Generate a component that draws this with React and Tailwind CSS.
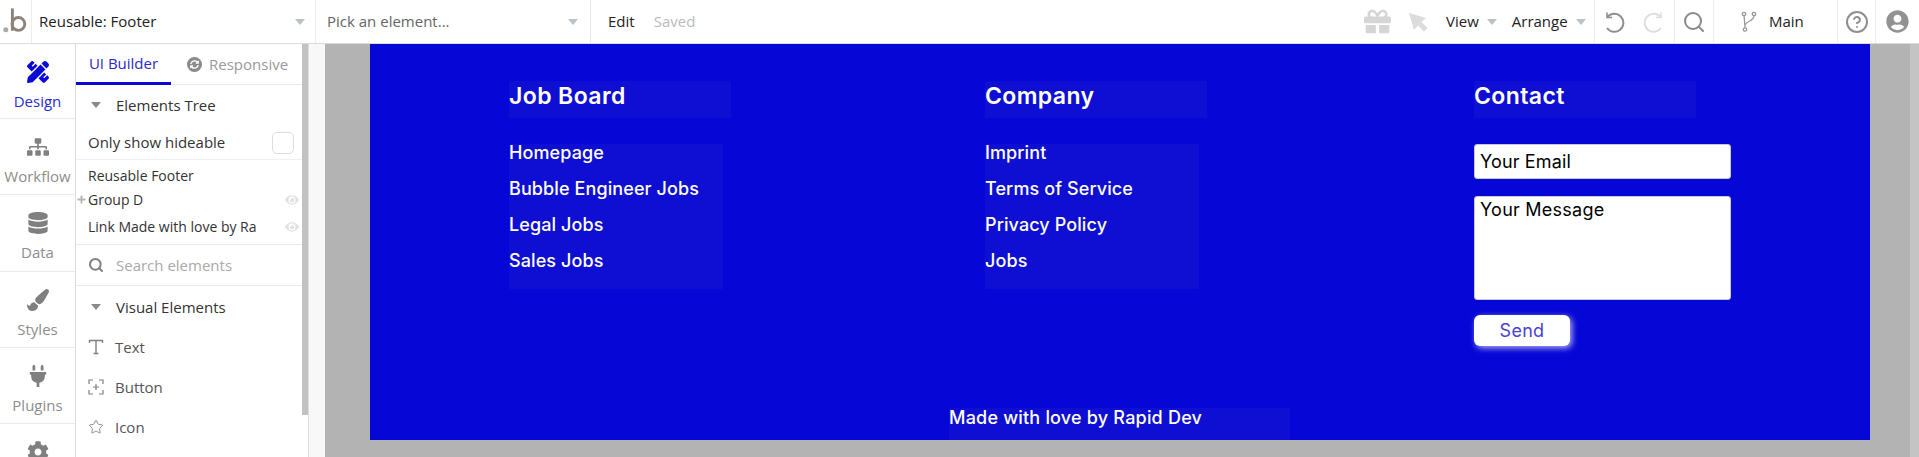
import React from "react";
import {
  FaPencilRuler,
  FaSitemap,
  FaDatabase,
  FaPaintBrush,
  FaPlug,
  FaCog,
  FaSyncAlt,
  FaEye,
  FaGift,
  FaUserCircle,
} from "react-icons/fa";
import { Search, Star, Plus, CircleHelp } from "lucide-react";

const Caret = ({ className = "" }) => (
  <span
    className={`w-0 h-0 border-l-[5px] border-r-[5px] border-t-[6px] border-l-transparent border-r-transparent border-t-[#b9c2c9] ${className}`}
  />
);

const DarkCaret = () => (
  <span className="w-0 h-0 border-l-[5.5px] border-r-[5.5px] border-t-[6px] border-l-transparent border-r-transparent border-t-[#8a8a8a]" />
);

const BubbleLogo = () => (
  <svg viewBox="0 0 32 44" className="w-[32px] h-[44px]" fill="none" stroke="#8c8279">
    <circle cx="6" cy="30" r="2.6" fill="#a8a8a8" stroke="none" />
    <path d="M12.8 8v23" strokeWidth="3" />
    <circle cx="19" cy="24" r="6.6" strokeWidth="3" />
  </svg>
);

const UndoIcon = ({ className = "" }) => (
  <svg viewBox="0 0 22 22" className={`w-[22px] h-[22px] ${className}`} fill="none" stroke="currentColor" strokeWidth="2">
    <path d="M4.5 6 A9 9 0 1 1 4 17" />
    <path d="M4 1.5 V6.5 H9" strokeWidth="1.6" />
  </svg>
);

const railItems = [
  { label: "Design", icon: FaPencilRuler, h: "h-[75px]", active: true },
  { label: "Workflow", icon: FaSitemap, h: "h-[76px]" },
  { label: "Data", icon: FaDatabase, h: "h-[77px]" },
  { label: "Styles", icon: FaPaintBrush, h: "h-[76px]" },
  { label: "Plugins", icon: FaPlug, h: "h-[76px]" },
  { icon: FaCog, h: "h-[76px]" },
];

const columns = [
  {
    title: "Job Board",
    colW: "w-[476px]",
    links: ["Homepage", "Bubble Engineer Jobs", "Legal Jobs", "Sales Jobs"],
  },
  {
    title: "Company",
    colW: "w-[489px]",
    links: ["Imprint", "Terms of Service", "Privacy Policy", "Jobs"],
  },
];

const TopBar = () => (
  <div className="h-[44px] flex items-stretch bg-white border-b border-[#dcdcdc] text-[15px]">
    <div className="w-[32px] border-r border-[#ededed] flex items-center justify-center">
      <BubbleLogo />
    </div>
    <div className="w-[284px] border-r border-[#ededed] flex items-center justify-between pl-[7px] pr-[10px] text-[#222]">
      <span>Reusable: Footer</span>
      <Caret />
    </div>
    <div className="w-[275px] border-r border-[#e6ebee] flex items-center justify-between pl-[11px] pr-[12px] text-[#666]">
      <span>Pick an element...</span>
      <Caret />
    </div>
    <div className="flex items-center pl-[17px] gap-[19px]">
      <span className="text-[#222]">Edit</span>
      <span className="text-[#bbb]">Saved</span>
    </div>

    <div className="ml-auto flex items-stretch">
      <div className="flex items-center w-[240px] pl-[9px] border-r border-[#ededed] text-[#222]">
        <FaGift className="text-[#d5d5d5] w-[27px] h-[27px]" />
        <svg viewBox="0 0 20 20" className="w-[20px] h-[20px] ml-[17px] mr-[18px]">
          <path d="M1 1 L18 6 L13.5 10 L19.5 16 L16 19.5 L10 13.5 L6 18 Z" fill="#dcdcdc" />
        </svg>
        <span>View</span>
        <Caret className="ml-[8px] mr-[15px]" />
        <span>Arrange</span>
        <Caret className="ml-[8px]" />
      </div>
      <div className="flex items-center w-[80px] pl-[8px] gap-[18px] border-r border-[#e6ebee]">
        <UndoIcon className="text-[#8f8f8f]" />
        <UndoIcon className="text-[#dedede] -scale-x-100" />
      </div>
      <div className="flex items-center justify-center w-[39px] border-r border-[#ededed]">
        <Search className="w-[24px] h-[24px] text-[#8a8a8a]" strokeWidth={2} />
      </div>
      <div className="flex items-center w-[124px] pl-[26px] gap-[10px] border-r border-[#ededed] text-[#222]">
        <svg viewBox="0 0 19 22" className="w-[19px] h-[22px]" fill="none" stroke="#999" strokeWidth="1.3">
          <circle cx="4" cy="3" r="1.7" />
          <circle cx="14" cy="3" r="1.7" />
          <circle cx="5" cy="18.5" r="1.7" />
          <path d="M4.1 4.7 L5 16.8 M14 4.7 C14 10 6 10 5 14" />
        </svg>
        <span>Main</span>
      </div>
      <div className="flex items-center justify-center w-[38px] border-r border-[#ededed]">
        <CircleHelp className="w-[24px] h-[24px] text-[#8f8f8f]" strokeWidth={2} />
      </div>
      <div className="flex items-center justify-center w-[43px]">
        <FaUserCircle className="w-[23px] h-[23px] text-[#929292]" />
      </div>
    </div>
  </div>
);

const Rail = () => (
  <div className="w-[76px] h-full shrink-0 border-r border-[#dcdcdc] bg-white overflow-hidden">
    {railItems.map((item, i) => {
      const Icon = item.icon;
      return (
        <div
          key={i}
          className={`${item.h} border-b border-[#e6ebee] flex flex-col items-center pt-[17px] gap-[8px] text-[15px] ${
            item.active ? "text-[#2a2ad6]" : "text-[#8d8d8d]"
          }`}
        >
          <Icon className={`w-[22px] h-[22px] ${item.active ? "text-[#0a0ad6]" : "text-[#808080]"}`} />
          {item.label && <span className="leading-[20px]">{item.label}</span>}
        </div>
      );
    })}
  </div>
);

const ElementRow = ({ icon, label }) => (
  <div className="h-[40px] flex items-center pl-[12px] gap-[11px] text-[#555]">
    <span className="w-[16px] flex justify-center text-[#808080]">{icon}</span>
    <span>{label}</span>
  </div>
);

const Panel = () => (
  <div className="w-[233px] h-full shrink-0 flex border-r border-[#dcdcdc] bg-white text-[15px] overflow-hidden">
    <div className="w-[226px] shrink-0">
      <div className="h-[41px] flex border-b border-[#e6ebee]">
        <div className="w-[95px] h-[41px] border-b-[3px] border-[#0a0ad6] text-[#2a2ac8] flex items-center justify-center">
          UI Builder
        </div>
        <div className="flex items-center pl-[16px] gap-[7px] text-[#999]">
          <span className="w-[15px] h-[15px] rounded-full bg-[#8a8a8a] flex items-center justify-center">
            <FaSyncAlt className="w-[9px] h-[9px] text-white" />
          </span>
          <span>Responsive</span>
        </div>
      </div>
      <div className="h-[40px] flex items-center pl-[15px] gap-[15px] text-[#333]">
        <DarkCaret />
        <span>Elements Tree</span>
      </div>
      <div className="h-[35px] flex items-center justify-between pl-[12px] pr-[8px] pt-[1px] border-b border-[#eef1f3] text-[#333]">
        <span>Only show hideable</span>
        <span className="w-[22px] h-[22px] rounded-[5px] border border-[#dcdcdc]" />
      </div>
      <div className="h-[85px] border-b border-[#e6ebee] pl-[12px] pr-[3px] text-[14px] text-[#333]">
        <div className="h-[29px] flex items-center pt-[2px]">Reusable Footer</div>
        <div className="relative h-[21px] flex items-center justify-between">
          <Plus className="absolute -left-[12px] w-[11px] h-[11px] text-[#b5b5b5]" strokeWidth={4} />
          <span>Group D</span>
          <FaEye className="w-[14px] h-[14px] text-[#e2e2e2]" />
        </div>
        <div className="h-[33px] flex items-center justify-between">
          <span>Link Made with love by Ra</span>
          <FaEye className="w-[14px] h-[14px] text-[#e2e2e2]" />
        </div>
      </div>
      <div className="h-[41px] flex items-center pl-[12px] gap-[12px] border-b border-[#e6ebee] text-[#aaa]">
        <Search className="w-[16px] h-[16px] text-[#808080]" strokeWidth={3} />
        <span>Search elements</span>
      </div>
      <div className="h-[41px] flex items-center pl-[15px] pt-[1px] gap-[15px] text-[#333]">
        <DarkCaret />
        <span>Visual Elements</span>
      </div>
      <ElementRow
        icon={
          <svg viewBox="0 0 16 16" className="w-[16px] h-[16px]" fill="none" stroke="#808080" strokeWidth="1.4">
            <path d="M1.5 4V1.5h13V4M8 1.5v13M5.5 14.5h5" />
          </svg>
        }
        label="Text"
      />
      <ElementRow
        icon={
          <svg viewBox="0 0 16 16" className="w-[16px] h-[16px]" fill="none" stroke="#808080" strokeWidth="1.2">
            <path d="M1 5V1h4M11 1h4v4M15 11v4h-4M5 15H1v-4M8 5v6M5 8h6" />
          </svg>
        }
        label="Button"
      />
      <ElementRow icon={<Star className="w-[16px] h-[16px]" strokeWidth={1.3} />} label="Icon" />
    </div>
    <div className="w-[6px] h-[371px] bg-[#c2c2c2]" />
  </div>
);

const FooterColumn = ({ title, colW, links }) => (
  <div className={`${colW} shrink-0`}>
    <div className="w-[222px] h-[37px] bg-[#0f0fd3] text-[23px] tracking-[0.4px] font-semibold text-white leading-[30px]">
      {title}
    </div>
    <div className="w-[214px] h-[145px] mt-[26px] bg-[#0f0fd3] text-[18px] tracking-[0.1px] font-medium text-white">
      {links.map((link) => (
        <div key={link} className="h-[36px] leading-[17px]">
          {link}
        </div>
      ))}
    </div>
  </div>
);

const Footer = () => (
  <div className="w-[1500px] h-[396px] bg-[#0606d6] font-['Inter',sans-serif] flex flex-col">
    <div className="flex pl-[139px] pt-[37px] h-[364px]">
      {columns.map((col) => (
        <FooterColumn key={col.title} {...col} />
      ))}
      <div className="w-[257px] shrink-0">
        <div className="w-[222px] h-[37px] bg-[#0f0fd3] text-[23px] tracking-[0.4px] font-semibold text-white leading-[30px]">
          Contact
        </div>
        <div className="h-[35px] mt-[26px] bg-white rounded-[3px] border border-[#c9c9c9] flex items-center pl-[5px] text-[18px] tracking-[0.15px] text-black">
          Your Email
        </div>
        <div className="h-[104px] mt-[17px] bg-white rounded-[3px] border border-[#c9c9c9] pl-[5px] text-[18px] tracking-[0.25px] leading-[26px] text-black">
          Your Message
        </div>
        <div className="w-[96px] h-[31px] mt-[15px] bg-white rounded-[6px] shadow-[2px_2px_6px_rgba(255,255,255,0.7)] flex items-center justify-center text-[18px] tracking-[0.3px] text-[#4a3fd0]">
          Send
        </div>
      </div>
    </div>
    <div className="w-[341px] h-[32px] ml-[579px] bg-[#0f0fd3] text-[18px] tracking-[0.2px] font-medium text-white leading-[20px]">
      Made with love by Rapid Dev
    </div>
  </div>
);

const Canvas = () => (
  <div className="flex-1 h-full flex bg-[#f8f8f8] overflow-hidden">
    <div className="ml-[16px] flex-1 h-full bg-[#b3b3b3] pl-[45px]">
      <Footer />
    </div>
    <div className="w-[9px] h-full bg-[#c4c4c4]" />
  </div>
);

export default function App() {
  return (
    <div className="w-[1919px] h-[457px] overflow-hidden flex flex-col bg-white font-['Open_Sans',sans-serif]">
      <TopBar />
      <div className="flex h-[413px]">
        <Rail />
        <Panel />
        <Canvas />
      </div>
    </div>
  );
}
